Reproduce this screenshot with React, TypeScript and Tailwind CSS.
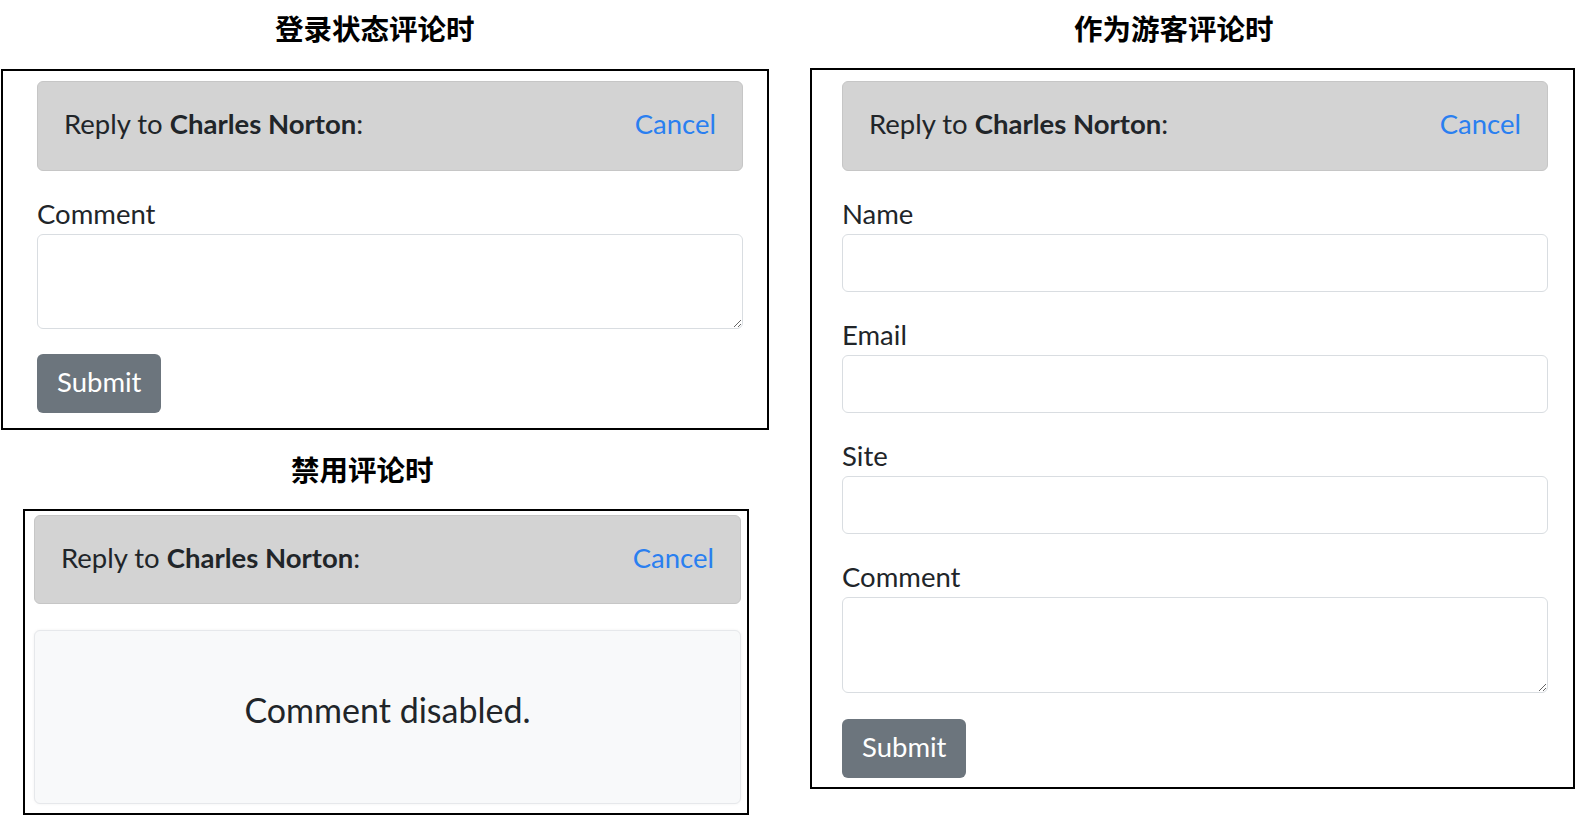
const font = { fontFamily: "Lato, 'Noto Sans', sans-serif" };

const ReplyBar = ({ className = "" }: { className?: string }) => (
  <div
    className={`flex items-center justify-between rounded-md border border-[#c6c6c6] bg-[#d3d3d3] pl-[26px] pr-[26px] pb-[4px] text-[27.5px] text-[#212529] ${className}`}
  >
    <span>
      Reply to <b className="font-bold">Charles Norton</b>:
    </span>
    <a className="text-[#2a7ff0]">Cancel</a>
  </div>
);

const Label = ({ text }: { text: string }) => (
  <label className="block text-[27.5px] leading-[41px] text-[#212529]">{text}</label>
);

const Title = ({ text, className = "" }: { text: string; className?: string }) => (
  <h2
    className={`text-[28.5px] leading-none font-bold text-black ${className}`}
    style={{ fontFamily: "'Noto Sans CJK SC', sans-serif" }}
  >
    {text}
  </h2>
);

const SubmitButton = () => (
  <button className="rounded-md bg-[#6c757d] px-[20px] pb-[2px] h-[59px] text-[27.5px] text-white">Submit</button>
);

const fieldClass = "block w-full rounded-md border border-[#d9dde1] bg-white";

export default function App() {
  return (
    <div className="flex w-[1576px] h-[816px] bg-white overflow-hidden" style={font}>
      {/* left column */}
      <div className="w-[810px] flex flex-col">
        <Title text="登录状态评论时" className="mt-[14px] ml-[275px]" />
        <div className="mt-[26px] ml-[1px] w-[768px] border-2 border-black pt-[10px] pl-[34px] pr-[24px] pb-[15px]">
          <ReplyBar className="h-[90px]" />
          <div className="mt-[22px]">
            <Label text="Comment" />
            <textarea className={`${fieldClass} h-[95px]`} />
          </div>
          <div className="mt-[25px]">
            <SubmitButton />
          </div>
        </div>

        <Title text="禁用评论时" className="mt-[25px] ml-[291px]" />
        <div className="mt-[26px] ml-[23px] w-[726px] border-2 border-black pt-[4px] pl-[9px] pr-[6px] pb-[9px]">
          <ReplyBar className="h-[89px]" />
          <div className="mt-[26px] h-[174px] flex items-center justify-center rounded-md border border-[#e6e8eb] bg-[#f8f9fa] shadow-[0_0_3px_rgba(0,0,0,0.06)] text-[34px] text-[#212529] pb-[16px]">
            Comment disabled.
          </div>
        </div>
      </div>

      {/* right column */}
      <div className="flex-1 flex flex-col">
        <Title text="作为游客评论时" className="mt-[14px] ml-[264px]" />
        <div className="mt-[25px] w-[765px] border-2 border-black pt-[11px] pl-[30px] pr-[25px] pb-[9px]">
          <ReplyBar className="h-[90px]" />
          <div className="mt-[22px]">
            <Label text="Name" />
            <input className={`${fieldClass} h-[58px]`} />
          </div>
          <div className="mt-[22px]">
            <Label text="Email" />
            <input className={`${fieldClass} h-[58px]`} />
          </div>
          <div className="mt-[22px]">
            <Label text="Site" />
            <input className={`${fieldClass} h-[58px]`} />
          </div>
          <div className="mt-[22px]">
            <Label text="Comment" />
            <textarea className={`${fieldClass} h-[96px]`} />
          </div>
          <div className="mt-[26px]">
            <SubmitButton />
          </div>
        </div>
      </div>
    </div>
  );
}
